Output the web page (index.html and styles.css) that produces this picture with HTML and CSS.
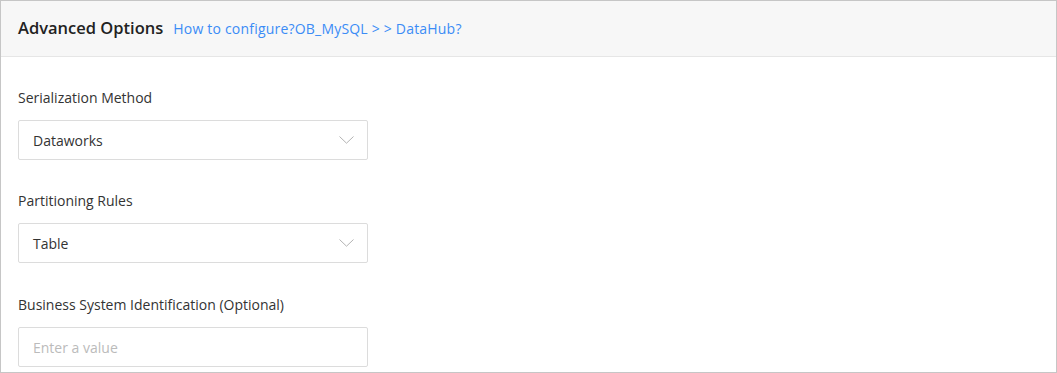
FILE: index.html
```html
<!DOCTYPE html>
<html lang="en">

<head>
  <meta charset="UTF-8">
  <title>Advanced Options</title>
  <link rel="stylesheet" href="styles.css">
</head>

<body>

  <div class="panel">
    <div class="panel-header">
      <h2>Advanced Options</h2>
      <a href="#" class="help-link">How to configure?OB_MySQL &gt; &gt; DataHub?</a>
    </div>

    <div class="panel-body">
      <div class="field">
        <label>Serialization Method</label>
        <div class="select">
          <span>Dataworks</span>
          <svg class="arrow" width="15" height="8" viewBox="0 0 15 8">
            <path d="M0.5 0.5 L7.5 7.2 L14.5 0.5" fill="none" stroke="#b3b3b3" stroke-width="1" />
          </svg>
        </div>
      </div>

      <div class="field">
        <label>Partitioning Rules</label>
        <div class="select">
          <span>Table</span>
          <svg class="arrow" width="15" height="8" viewBox="0 0 15 8">
            <path d="M0.5 0.5 L7.5 7.2 L14.5 0.5" fill="none" stroke="#b3b3b3" stroke-width="1" />
          </svg>
        </div>
      </div>

      <div class="field last">
        <label>Business System Identification (Optional)</label>
        <input type="text" placeholder="Enter a value">
      </div>
    </div>
  </div>

</body>

</html>
```

FILE: styles.css
```css
* {
  box-sizing: border-box;
}

body {
  margin: 0;
  padding: 0;
  font-family: 'Open Sans', 'Noto Sans', sans-serif;
  background: #fff;
  color: #333;
}

.panel {
  width: 1057px;
  height: 373px;
  border: 1px solid #c6c6c6;
  overflow: hidden;
}

.panel-header {
  display: flex;
  align-items: baseline;
  height: 56px;
  padding: 15px 17px 0;
  background: #f7f7f7;
  border-bottom: 1px solid #e6e6e6;
}

.panel-header h2 {
  margin: 0 10px 0 0;
  font-size: 16.5px;
  font-weight: 600;
  color: #222;
}

.help-link {
  font-size: 14px;
  letter-spacing: 0.2px;
  color: #3b8cf6;
  text-decoration: none;
}

.panel-body {
  padding: 31px 17px 0;
}

.field {
  margin-bottom: 31px;
}

.field.last {
  margin-top: 32px;
}

.field label {
  display: block;
  font-size: 14px;
  line-height: 20px;
  color: #333;
  margin-bottom: 12px;
}

.select,
.field input {
  width: 350px;
  height: 40px;
  border: 1px solid #dcdcdc;
  border-radius: 2px;
  background: #fff;
  padding: 0 13px 0 14px;
  font-family: inherit;
  font-size: 14px;
  color: #333;
}

.select {
  display: flex;
  align-items: center;
  justify-content: space-between;
}

.field input {
  outline: none;
}

.field input::placeholder {
  color: #bbb;
}
```
